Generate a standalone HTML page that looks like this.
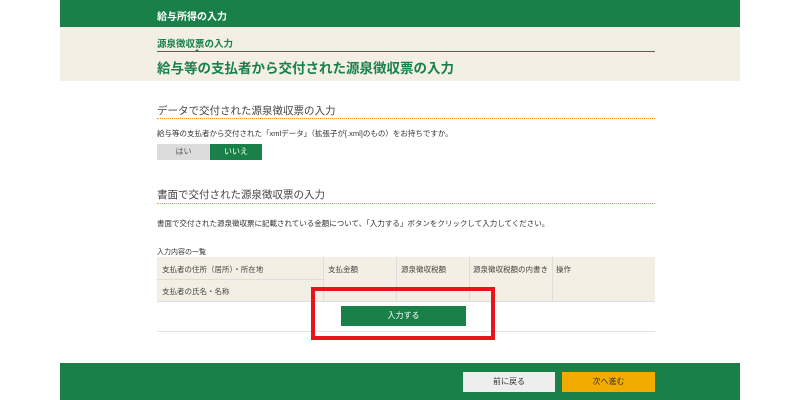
<!DOCTYPE html><html><head><meta charset="utf-8"><style>
*{margin:0;padding:0;box-sizing:border-box}
body{width:800px;height:400px;background:#fff;font-family:"Liberation Sans","Noto Sans CJK JP",sans-serif;position:relative;overflow:hidden;color:#333}
.a{position:absolute}
</style></head><body>
<div class="a" style="left:60px;top:0;width:680px;height:27px;background:#1a804a"></div>
<div class="a" style="left:157px;top:8px;font-size:10px;color:#fff;font-weight:bold">給与所得の入力</div>
<div class="a" style="left:60px;top:27px;width:680px;height:54px;background:#f3efe4"></div>
<div class="a" style="left:157px;top:36px;font-size:9.5px;color:#1a804a;font-weight:bold">源泉徴収票の入力</div>
<div class="a" style="left:157px;top:51px;width:498px;height:1px;background:#1a804a"></div>
<div class="a" style="left:195px;top:49px;width:0;height:0;border-left:2px solid transparent;border-right:2px solid transparent;border-bottom:2px solid #1a804a"></div>
<div class="a" style="left:157px;top:57px;font-size:13.5px;color:#1a804a;font-weight:bold">給与等の支払者から交付された源泉徴収票の入力</div>
<div class="a" style="left:157px;top:103px;font-size:10.5px;color:#444">データで交付された源泉徴収票の入力</div>
<div class="a" style="left:157px;top:118px;width:498px;border-top:1px dotted #f0a020"></div>
<div class="a" style="left:157px;top:128px;font-size:7.5px;color:#333">給与等の支払者から交付された「xmlデータ」（拡張子が[.xml]のもの）をお持ちですか。</div>
<div class="a" style="left:157px;top:144px;width:53px;height:16px;background:#dcdcdc;font-size:8px;color:#555;text-align:center;line-height:16px">はい</div>
<div class="a" style="left:210px;top:144px;width:52px;height:16px;background:#1a804a;font-size:8px;color:#fff;text-align:center;line-height:16px">いいえ</div>
<div class="a" style="left:157px;top:187px;font-size:10.5px;color:#444">書面で交付された源泉徴収票の入力</div>
<div class="a" style="left:157px;top:203px;width:498px;border-top:1px dotted #f0a020"></div>
<div class="a" style="left:157px;top:218px;font-size:7.5px;color:#333">書面で交付された源泉徴収票に記載されている金額について、「入力する」ボタンをクリックして入力してください。</div>
<div class="a" style="left:157px;top:247px;font-size:7px;color:#333">入力内容の一覧</div>
<div class="a" style="left:157px;top:257px;width:498px;height:45px;background:#f3efe4;border-bottom:1px solid #ddd"></div>
<div class="a" style="left:157px;top:279px;width:166px;height:1px;background:#ddd"></div>
<div class="a" style="left:323px;top:257px;width:1px;height:45px;background:#ddd"></div>
<div class="a" style="left:396px;top:257px;width:1px;height:45px;background:#ddd"></div>
<div class="a" style="left:469px;top:257px;width:1px;height:45px;background:#ddd"></div>
<div class="a" style="left:552px;top:257px;width:1px;height:45px;background:#ddd"></div>
<div class="a" style="left:162px;top:264px;font-size:7.5px;color:#444">支払者の住所（居所）・所在地</div>
<div class="a" style="left:162px;top:286px;font-size:7.5px;color:#444">支払者の氏名・名称</div>
<div class="a" style="left:328px;top:264px;font-size:7.5px;color:#444">支払金額</div>
<div class="a" style="left:401px;top:264px;font-size:7.5px;color:#444">源泉徴収税額</div>
<div class="a" style="left:473px;top:264px;font-size:7.5px;color:#444">源泉徴収税額の内書き</div>
<div class="a" style="left:556px;top:264px;font-size:7.5px;color:#444">操作</div>
<div class="a" style="left:341px;top:306px;width:125px;height:20px;background:#1a804a;color:#fff;font-size:8px;text-align:center;line-height:20px">入力する</div>
<div class="a" style="left:157px;top:331px;width:498px;height:1px;background:#e4e4e4"></div>
<div class="a" style="left:311px;top:287px;width:184px;height:53px;border:4px solid #e8141c"></div>
<div class="a" style="left:60px;top:363px;width:680px;height:37px;background:#1a804a"></div>
<div class="a" style="left:463px;top:372px;width:92px;height:20px;background:#eee;font-size:8px;color:#333;text-align:center;line-height:20px">前に戻る</div>
<div class="a" style="left:562px;top:372px;width:93px;height:20px;background:#f2ab00;font-size:8px;color:#333;text-align:center;line-height:20px">次へ進む</div>
</body></html>
